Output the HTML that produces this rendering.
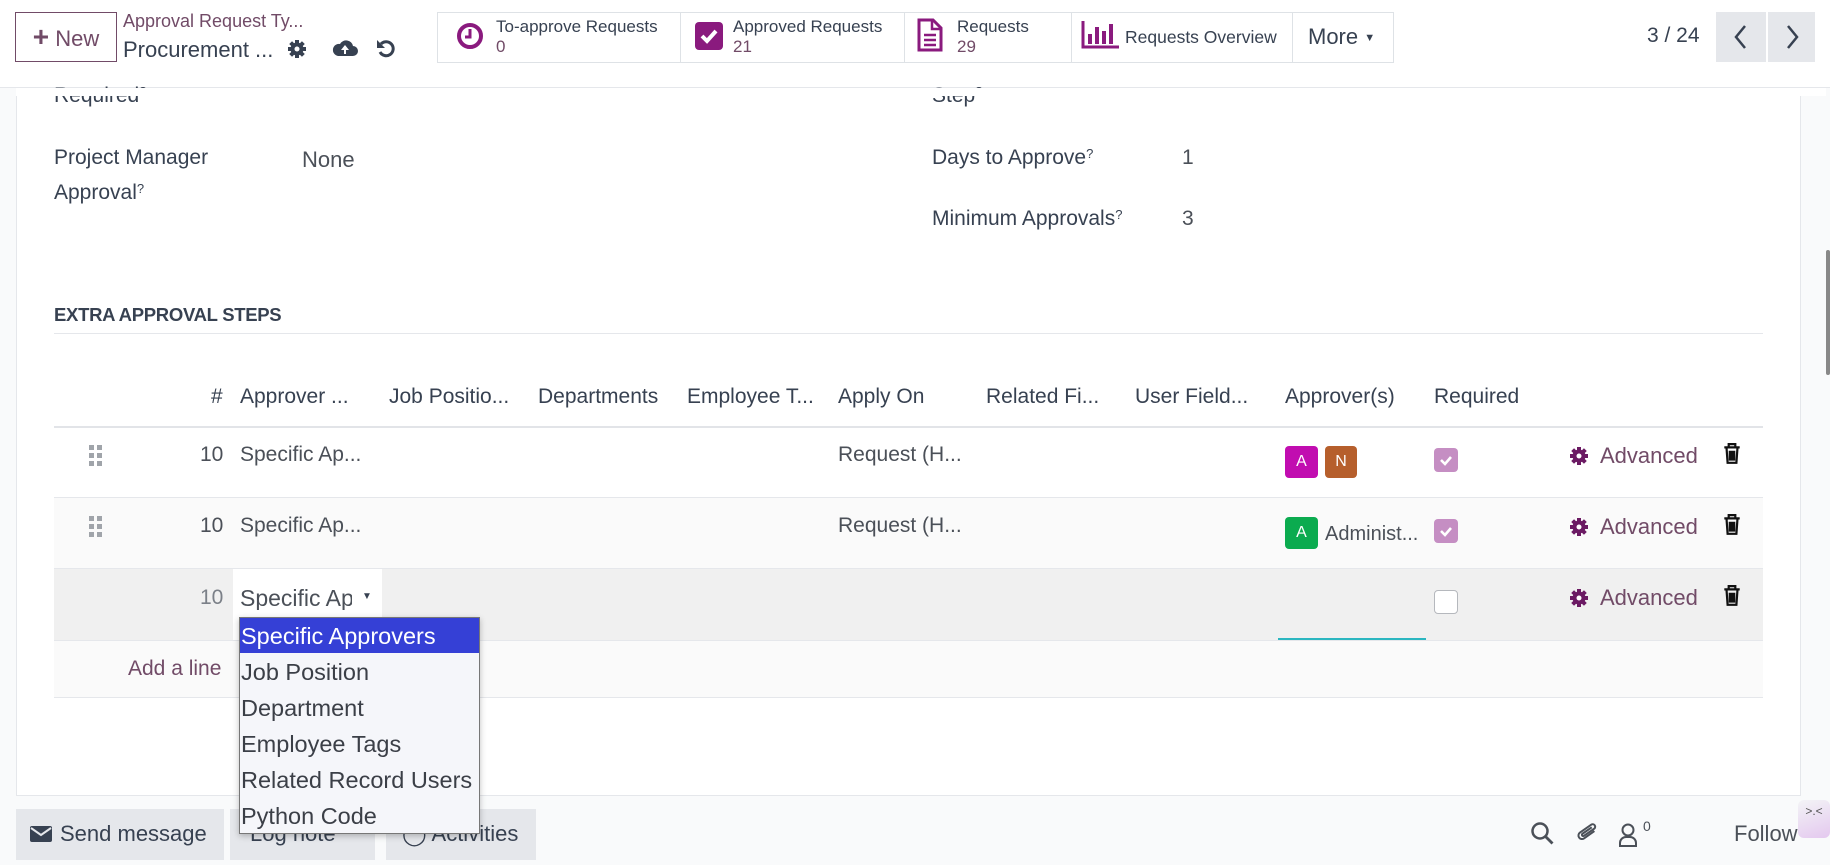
<!DOCTYPE html>
<html><head><meta charset="utf-8"><style>
*{box-sizing:border-box;margin:0;padding:0}
body{width:1830px;height:865px;overflow:hidden;background:#f9fafb;font-family:"Liberation Sans",sans-serif;color:#374151;position:relative}
.a{position:absolute;white-space:nowrap}
.t{position:absolute;white-space:nowrap;line-height:24px;font-size:21px;color:#4b5058}
.p{color:#714B67}
.h{font-size:21px;color:#374151}
sup{font-size:13px;vertical-align:top;position:relative;top:-4px}
</style></head><body>
<!-- top bar -->
<div class="a" style="left:0;top:0;width:1830px;height:88px;background:#fff;border-bottom:1px solid #e5e7eb"></div>
<div class="a" style="left:15px;top:12px;width:102px;height:50px;border:1px solid #714B67;color:#714B67;font-size:22px;line-height:48px;text-align:center"><b style="font-size:28px">+</b> New</div>
<div class="a" style="left:123px;top:11px;font-size:18px;color:#714B67">Approval Request Ty...</div>
<div class="a" style="left:123px;top:37px;font-size:22px;color:#374151">Procurement ...</div>
<svg class="a" style="left:287px;top:39px" width="20" height="20" viewBox="0 0 20 20"><g fill="#374151"><circle cx="10" cy="10" r="6.5"/><rect x="8" y="1" width="4" height="18"/><rect x="1" y="8" width="18" height="4"/><rect x="8" y="1" width="4" height="18" transform="rotate(45 10 10)"/><rect x="8" y="1" width="4" height="18" transform="rotate(-45 10 10)"/></g><circle cx="10" cy="10" r="2.5" fill="#fff"/></svg>
<svg class="a" style="left:332px;top:38px" width="26" height="20" viewBox="0 0 26 20"><path d="M6 18h15a5 5 0 0 0 0-10 7 7 0 0 0-13-2A6 6 0 0 0 6 18z" fill="#374151"/><path d="M13 7l-4 5h3v4h2v-4h3z" fill="#fff"/></svg>
<svg class="a" style="left:375px;top:38px" width="22" height="22" viewBox="0 0 22 22"><path d="M6 6a7 7 0 1 1-1 8" fill="none" stroke="#374151" stroke-width="3"/><path d="M2 2v8h8z" fill="#374151"/></svg>

<div class="a" style="left:437px;top:12px;width:957px;height:51px;border:1px solid #dee2e6;background:#fff"></div>
<div class="a" style="left:680px;top:12px;width:1px;height:51px;background:#dee2e6"></div>
<div class="a" style="left:904px;top:12px;width:1px;height:51px;background:#dee2e6"></div>
<div class="a" style="left:1071px;top:12px;width:1px;height:51px;background:#dee2e6"></div>
<div class="a" style="left:1292px;top:12px;width:1px;height:51px;background:#dee2e6"></div>
<svg class="a" style="left:456px;top:22px" width="28" height="28" viewBox="0 0 28 28"><circle cx="14" cy="14" r="11" fill="none" stroke="#8a1a7e" stroke-width="4"/><path d="M14 7v8h-5" fill="none" stroke="#8a1a7e" stroke-width="3"/></svg>
<div class="a" style="left:496px;top:17px;font-size:17px;color:#374151">To-approve Requests</div>
<div class="a" style="left:496px;top:37px;font-size:17px;color:#714B67">0</div>
<svg class="a" style="left:694px;top:21px" width="30" height="30" viewBox="0 0 30 30"><rect x="1" y="1" width="28" height="28" rx="4" fill="#8a1a7e"/><path d="M8 15l5 5 9-10" fill="none" stroke="#fff" stroke-width="4"/></svg>
<div class="a" style="left:733px;top:17px;font-size:17px;color:#374151">Approved Requests</div>
<div class="a" style="left:733px;top:37px;font-size:17px;color:#714B67">21</div>
<svg class="a" style="left:917px;top:18px" width="26" height="34" viewBox="0 0 26 34"><path d="M2 2h14l8 8v22H2z" fill="none" stroke="#8a1a7e" stroke-width="3"/><path d="M15 2v9h9M7 17h12M7 22h12M7 27h12" fill="none" stroke="#8a1a7e" stroke-width="2.5"/></svg>
<div class="a" style="left:957px;top:17px;font-size:17px;color:#374151">Requests</div>
<div class="a" style="left:957px;top:37px;font-size:17px;color:#714B67">29</div>
<svg class="a" style="left:1081px;top:21px" width="40" height="28" viewBox="0 0 40 28"><path d="M2 0v26h36" fill="none" stroke="#8a1a7e" stroke-width="3"/><g fill="#8a1a7e"><rect x="7" y="13" width="4" height="10"/><rect x="14" y="6" width="4" height="17"/><rect x="21" y="10" width="4" height="13"/><rect x="28" y="3" width="4" height="20"/></g></svg>
<div class="a" style="left:1125px;top:27px;font-size:17.5px;color:#374151">Requests Overview</div>
<div class="a" style="left:1308px;top:24px;font-size:22px;color:#374151">More <span style="font-size:11px;vertical-align:middle">▼</span></div>

<div class="a" style="left:1647px;top:24px;font-size:21px;color:#374151">3 / 24</div>
<div class="a" style="left:1716px;top:12px;width:50px;height:50px;background:#e5e7eb"></div>
<div class="a" style="left:1768px;top:12px;width:47px;height:50px;background:#e5e7eb"></div>
<svg class="a" style="left:1733px;top:24px" width="16" height="26" viewBox="0 0 16 26"><path d="M12 2L3 13l9 11" fill="none" stroke="#374151" stroke-width="2.5"/></svg>
<svg class="a" style="left:1784px;top:24px" width="16" height="26" viewBox="0 0 16 26"><path d="M4 2l9 11-9 11" fill="none" stroke="#374151" stroke-width="2.5"/></svg>

<!-- sheet -->
<div class="a" style="left:16px;top:89px;width:1785px;height:707px;background:#fff;border-left:1px solid #e5e7eb;border-right:1px solid #e5e7eb;border-bottom:1px solid #e5e7eb"></div>
<div class="a" style="left:1826px;top:250px;width:4px;height:125px;background:#888;border-radius:2px"></div>

<div class="t h" style="left:54px;top:84px">Required<sup>?</sup></div>
<div class="t h" style="left:932px;top:84px">Step<sup>?</sup></div>
<div class="a" style="left:0;top:88px;width:1826px;height:8px;background:#fff"></div>
<div class="a" style="left:0;top:88px;width:16px;height:8px;background:#f9fafb"></div>
<div class="t h" style="left:54px;top:146px">Project Manager</div>
<div class="t h" style="left:54px;top:181px">Approval<sup>?</sup></div>
<div class="t" style="left:302px;top:148px;font-size:22px">None</div>
<div class="t h" style="left:932px;top:146px">Days to Approve<sup>?</sup></div>
<div class="t" style="left:1182px;top:146px">1</div>
<div class="t h" style="left:932px;top:207px">Minimum Approvals<sup>?</sup></div>
<div class="t" style="left:1182px;top:207px">3</div>

<div class="t" style="left:54px;top:303px;font-size:18.5px;font-weight:bold;color:#374151;letter-spacing:-0.3px">EXTRA APPROVAL STEPS</div>
<div class="a" style="left:54px;top:333px;width:1709px;height:1px;background:#e5e7eb"></div>

<!-- table -->
<div class="t h" style="left:211px;top:385px">#</div>
<div class="t h" style="left:240px;top:385px">Approver ...</div>
<div class="t h" style="left:389px;top:385px">Job Positio...</div>
<div class="t h" style="left:538px;top:385px">Departments</div>
<div class="t h" style="left:687px;top:385px">Employee T...</div>
<div class="t h" style="left:838px;top:385px">Apply On</div>
<div class="t h" style="left:986px;top:385px">Related Fi...</div>
<div class="t h" style="left:1135px;top:385px">User Field...</div>
<div class="t h" style="left:1285px;top:385px">Approver(s)</div>
<div class="t h" style="left:1434px;top:385px">Required</div>
<div class="a" style="left:54px;top:426px;width:1709px;height:2px;background:#e2e4e8"></div>

<div class="a" style="left:54px;top:497px;width:1709px;height:71px;background:#fafafa;border-top:1px solid #e5e7eb"></div>
<div class="a" style="left:54px;top:568px;width:1709px;height:72px;background:#f0f0f0;border-top:1px solid #e5e7eb"></div>
<div class="a" style="left:54px;top:640px;width:1709px;height:58px;background:#fafafa;border-top:1px solid #e5e7eb;border-bottom:1px solid #e5e7eb"></div>

<!-- drag handles -->
<svg class="a" style="left:89px;top:445px" width="14" height="22" viewBox="0 0 14 22"><g fill="#a0a4aa"><rect x="0" y="0" width="5" height="5"/><rect x="8" y="0" width="5" height="5"/><rect x="0" y="8" width="5" height="5"/><rect x="8" y="8" width="5" height="5"/><rect x="0" y="16" width="5" height="5"/><rect x="8" y="16" width="5" height="5"/></g></svg>
<svg class="a" style="left:89px;top:516px" width="14" height="22" viewBox="0 0 14 22"><g fill="#a0a4aa"><rect x="0" y="0" width="5" height="5"/><rect x="8" y="0" width="5" height="5"/><rect x="0" y="8" width="5" height="5"/><rect x="8" y="8" width="5" height="5"/><rect x="0" y="16" width="5" height="5"/><rect x="8" y="16" width="5" height="5"/></g></svg>

<div class="t" style="left:200px;top:443px">10</div>
<div class="t" style="left:240px;top:443px">Specific Ap...</div>
<div class="t" style="left:838px;top:443px">Request (H...</div>
<div class="a" style="left:1285px;top:446px;width:33px;height:32px;background:#c10db0;border-radius:4px;color:#fff;font-size:16px;text-align:center;line-height:32px">A</div>
<div class="a" style="left:1325px;top:446px;width:32px;height:32px;background:#b65f2c;border-radius:4px;color:#fff;font-size:16px;text-align:center;line-height:32px">N</div>
<div class="a" style="left:1434px;top:448px;width:24px;height:24px;background:#c58ec3;border-radius:4px"><svg width="24" height="24" viewBox="0 0 24 24"><path d="M7 12l4 4 6-7" fill="none" stroke="#fff" stroke-width="2.6"/></svg></div>

<div class="t" style="left:200px;top:514px">10</div>
<div class="t" style="left:240px;top:514px">Specific Ap...</div>
<div class="t" style="left:838px;top:514px">Request (H...</div>
<div class="a" style="left:1285px;top:517px;width:33px;height:32px;background:#0bab4f;border-radius:4px;color:#fff;font-size:16px;text-align:center;line-height:32px">A</div>
<div class="t" style="left:1325px;top:522px;font-size:20px">Administ...</div>
<div class="a" style="left:1434px;top:519px;width:24px;height:24px;background:#c58ec3;border-radius:4px"><svg width="24" height="24" viewBox="0 0 24 24"><path d="M7 12l4 4 6-7" fill="none" stroke="#fff" stroke-width="2.6"/></svg></div>

<div class="t" style="left:200px;top:586px;color:#7b8088">10</div>
<div class="a" style="left:233px;top:569px;width:149px;height:71px;background:#fff"></div>
<div class="t" style="left:240px;top:586px;font-size:23px;width:112px;overflow:hidden">Specific Approvers</div>
<div class="a" style="left:362px;top:591px;font-size:10px;color:#374151">▼</div>
<div class="a" style="left:1434px;top:590px;width:24px;height:24px;background:#fff;border:1px solid #b5b8bd;border-radius:4px"></div>
<div class="a" style="left:1278px;top:638px;width:148px;height:2px;background:#2bb6c0"></div>

<!-- advanced + trash -->
<svg class="a" style="left:1569px;top:446px" width="20" height="20" viewBox="0 0 20 20"><g fill="#6b1a63"><circle cx="10" cy="10" r="6.5"/><rect x="8" y="1" width="4" height="18"/><rect x="1" y="8" width="18" height="4"/><rect x="8" y="1" width="4" height="18" transform="rotate(45 10 10)"/><rect x="8" y="1" width="4" height="18" transform="rotate(-45 10 10)"/></g><circle cx="10" cy="10" r="2.5" fill="#fff"/></svg>
<div class="t p" style="left:1600px;top:444px;font-size:22px">Advanced</div>
<svg class="a" style="left:1723px;top:443px" width="18" height="22" viewBox="0 0 16 20"><path d="M1 4h14M5 4V1h6v3M3 4l1 14h8l1-14M6 7v9M8 7v9M10 7v9" fill="none" stroke="#111" stroke-width="2"/></svg>
<svg class="a" style="left:1569px;top:517px" width="20" height="20" viewBox="0 0 20 20"><g fill="#6b1a63"><circle cx="10" cy="10" r="6.5"/><rect x="8" y="1" width="4" height="18"/><rect x="1" y="8" width="18" height="4"/><rect x="8" y="1" width="4" height="18" transform="rotate(45 10 10)"/><rect x="8" y="1" width="4" height="18" transform="rotate(-45 10 10)"/></g><circle cx="10" cy="10" r="2.5" fill="#fff"/></svg>
<div class="t p" style="left:1600px;top:515px;font-size:22px">Advanced</div>
<svg class="a" style="left:1723px;top:514px" width="18" height="22" viewBox="0 0 16 20"><path d="M1 4h14M5 4V1h6v3M3 4l1 14h8l1-14M6 7v9M8 7v9M10 7v9" fill="none" stroke="#111" stroke-width="2"/></svg>
<svg class="a" style="left:1569px;top:588px" width="20" height="20" viewBox="0 0 20 20"><g fill="#6b1a63"><circle cx="10" cy="10" r="6.5"/><rect x="8" y="1" width="4" height="18"/><rect x="1" y="8" width="18" height="4"/><rect x="8" y="1" width="4" height="18" transform="rotate(45 10 10)"/><rect x="8" y="1" width="4" height="18" transform="rotate(-45 10 10)"/></g><circle cx="10" cy="10" r="2.5" fill="#fff"/></svg>
<div class="t p" style="left:1600px;top:586px;font-size:22px">Advanced</div>
<svg class="a" style="left:1723px;top:585px" width="18" height="22" viewBox="0 0 16 20"><path d="M1 4h14M5 4V1h6v3M3 4l1 14h8l1-14M6 7v9M8 7v9M10 7v9" fill="none" stroke="#111" stroke-width="2"/></svg>

<div class="t p" style="left:128px;top:657px">Add a line</div>

<!-- chatter -->
<div class="a" style="left:16px;top:809px;width:208px;height:51px;background:#e5e7eb"></div>
<div class="a" style="left:230px;top:809px;width:145px;height:51px;background:#e5e7eb"></div>
<div class="a" style="left:386px;top:809px;width:150px;height:51px;background:#e5e7eb"></div>
<svg class="a" style="left:30px;top:826px" width="22" height="16" viewBox="0 0 22 16"><rect x="0" y="0" width="22" height="16" rx="2" fill="#374151"/><path d="M1 2l10 7 10-7" fill="none" stroke="#e5e7eb" stroke-width="2"/></svg>
<div class="t" style="left:60px;top:822px;font-size:22px;color:#374151">Send message</div>
<div class="t" style="left:250px;top:822px;font-size:22px;color:#374151">Log note</div>
<div class="t" style="left:402px;top:822px;font-size:22px;color:#374151">◯ Activities</div>

<svg class="a" style="left:1530px;top:821px" width="26" height="26" viewBox="0 0 26 26"><circle cx="10" cy="10" r="7.5" fill="none" stroke="#4b5058" stroke-width="2.5"/><path d="M15.5 15.5l7 7" stroke="#4b5058" stroke-width="2.8"/></svg>
<svg class="a" style="left:1576px;top:819px" width="24" height="28" viewBox="0 0 24 28"><path d="M18 11l-9 9a3.5 3.5 0 0 1-5-5l10-10a2.5 2.5 0 0 1 3.5 3.5l-9 9a1.2 1.2 0 0 1-1.8-1.8l8-8" fill="none" stroke="#4b5058" stroke-width="2" transform="rotate(10 12 14)"/></svg>
<svg class="a" style="left:1618px;top:822px" width="20" height="26" viewBox="0 0 20 26"><circle cx="10" cy="8" r="5.5" fill="none" stroke="#4b5058" stroke-width="2"/><path d="M2 24v-3a6 6 0 0 1 6-6h4a6 6 0 0 1 6 6v3z" fill="none" stroke="#4b5058" stroke-width="2"/></svg>
<div class="a" style="left:1643px;top:818px;font-size:14px;color:#4b5058">0</div>
<div class="t" style="left:1734px;top:822px;font-size:22px;color:#4b5058">Follow</div>
<div class="a" style="left:1798px;top:800px;width:32px;height:38px;background:linear-gradient(160deg,#f3f4f6,#e4c8ef);border-radius:6px;font-size:12px;color:#555;text-align:center;line-height:22px">&gt;.&lt;</div>

<!-- dropdown -->
<div class="a" style="left:239px;top:617px;width:241px;height:217px;background:#f5f6fa;border:1px solid #777;box-shadow:0 2px 6px rgba(0,0,0,.25)"></div>
<div class="a" style="left:240px;top:618px;width:239px;height:35px;background:#3540d6"></div>
<div class="a" style="left:241px;top:620px;font-size:23.5px;line-height:32px;color:#fff">Specific Approvers</div>
<div class="a" style="left:241px;top:656px;font-size:23.5px;line-height:32px;color:#3b3f47">Job Position</div>
<div class="a" style="left:241px;top:692px;font-size:23.5px;line-height:32px;color:#3b3f47">Department</div>
<div class="a" style="left:241px;top:728px;font-size:23.5px;line-height:32px;color:#3b3f47">Employee Tags</div>
<div class="a" style="left:241px;top:764px;font-size:23.5px;line-height:32px;color:#3b3f47">Related Record Users</div>
<div class="a" style="left:241px;top:800px;font-size:23.5px;line-height:32px;color:#3b3f47">Python Code</div>
</body></html>
